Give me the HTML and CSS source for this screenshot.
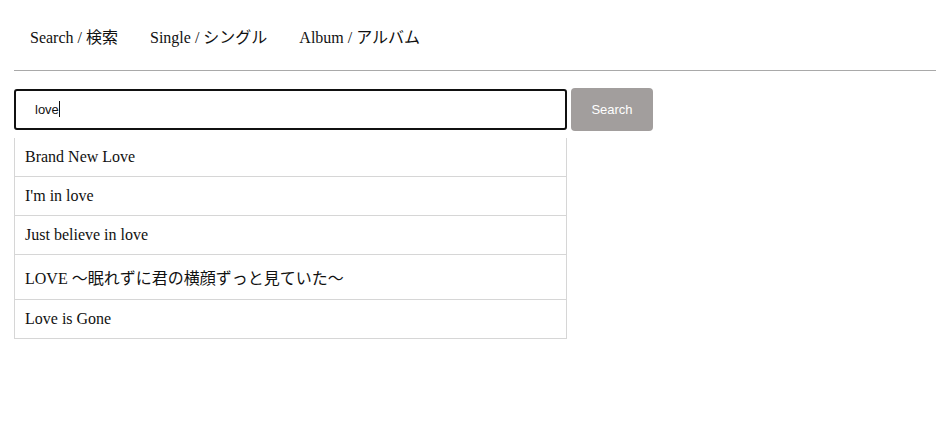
FILE: index.html
```html
<!DOCTYPE html>
<html lang="ja">
<head>
<meta charset="utf-8">
<link rel="stylesheet" href="styles.css">
</head>
<body>
<div class="page">
  <nav class="nav">
    <a class="nav-link">Search / 検索</a>
    <a class="nav-link">Single / シングル</a>
    <a class="nav-link">Album / アルバム</a>
  </nav>
  <div class="search-row">
    <div class="field">
      <div class="input">love<span class="caret"></span></div>
      <ul class="suggest">
        <li>Brand New Love</li>
        <li>I'm in love</li>
        <li>Just believe in love</li>
        <li>LOVE 〜眠れずに君の横顔ずっと見ていた〜</li>
        <li>Love is Gone</li>
      </ul>
    </div>
    <button class="btn">Search</button>
  </div>
</div>
</body>
</html>
```

FILE: styles.css
```css
html, body { margin: 0; padding: 0; background: #fff; }
body {
  font-family: "Liberation Serif", "Noto Sans CJK JP", serif;
  font-size: 16px;
  color: #111;
}
.page { padding: 0 15px 0 14px; }
.nav {
  display: flex;
  gap: 32px;
  padding: 27px 16px 0;
  height: 43px;
  border-bottom: 1px solid #a9a9a9;
}
.nav-link {
  line-height: 22px;
  color: #111;
}
.search-row {
  display: flex;
  align-items: flex-start;
  gap: 4px;
  margin-top: 17px;
}
.field { width: 553px; }
.input {
  box-sizing: border-box;
  height: 41px;
  margin-top: 1px;
  border: 2px solid #111;
  border-radius: 3px;
  padding: 0 19px;
  font-family: "Liberation Sans", Arial, sans-serif;
  font-size: 13px;
  line-height: 37px;
  color: #111;
}
.caret {
  display: inline-block;
  width: 1px;
  height: 16px;
  background: #111;
  vertical-align: -3px;
}
.suggest {
  list-style: none;
  margin: 8px 0 0;
  padding: 0;
  border-left: 1px solid #d6d6d6;
  border-right: 1px solid #d6d6d6;
}
.suggest li {
  padding: 10px 10px;
  border-bottom: 1px solid #d6d6d6;
  line-height: normal;
}
.btn {
  width: 82px;
  height: 43px;
  border: none;
  border-radius: 4px;
  background: #a29e9d;
  color: #fff;
  font-family: "Liberation Sans", Arial, sans-serif;
  font-size: 13px;
  padding: 0;
}
```
